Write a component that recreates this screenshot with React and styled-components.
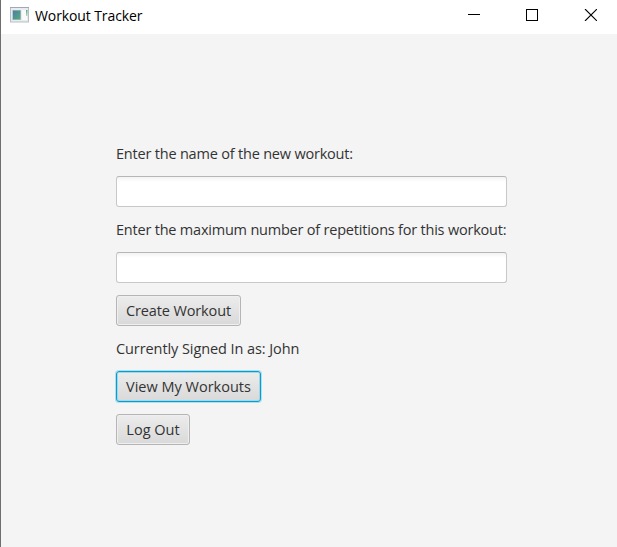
import React from 'react';
import styled, { createGlobalStyle } from 'styled-components';

const GlobalStyle = createGlobalStyle`
  * { box-sizing: border-box; }
  body { margin: 0; background: #f4f4f4; font-family: "Open Sans", "Noto Sans", sans-serif; }
`;

const Window = styled.div`
  width: 617px;
  height: 547px;
  display: flex;
  flex-direction: column;
  background: #f4f4f4;
  border-left: 1px solid #6e6e6e;
  overflow: hidden;
`;

const TitleBar = styled.header`
  height: 34px;
  flex: none;
  display: flex;
  align-items: flex-start;
  justify-content: space-between;
  background: #fff;
  padding: 0 20px 0 9px;
`;

const TitleGroup = styled.div`
  display: flex;
  align-items: flex-start;
  gap: 6px;
  padding-top: 6px;
`;

const AppIcon = styled.svg`
  display: block;
  margin-top: 1px;
`;

const Title = styled.h1`
  margin: 0;
  font-size: 14px;
  font-weight: 400;
  line-height: 20px;
  letter-spacing: -0.1px;
  white-space: nowrap;
  color: #000;
`;

const Controls = styled.div`
  display: flex;
  gap: 46px;
  padding-top: 9px;
`;

const Control = styled.button`
  padding: 0;
  border: 0;
  background: none;
  display: block;
  height: 12px;

  svg { display: block; }
`;

const Form = styled.main`
  width: 391px;
  margin: 109px 0 0 115px;
  display: flex;
  flex-direction: column;
  align-items: flex-start;
  gap: 12px;
`;

const Label = styled.label`
  height: 21px;
  font-size: 14.5px;
  line-height: 21px;
  letter-spacing: ${(p) => p.$track || 0}px;
  white-space: nowrap;
  color: #333;
`;

const Field = styled.input`
  width: 391px;
  height: 31px;
  padding: 0 9px;
  border: 1px solid #c8c8c8;
  border-top-color: #b6b6b6;
  border-radius: 3px;
  outline: none;
  background: linear-gradient(#f3f3f3, #fff 5px);
  font: inherit;
`;

const Button = styled.button`
  height: 31px;
  width: ${(p) => p.$width}px;
  padding: 0;
  border: 1px solid ${(p) => (p.$focused ? '#039ed3' : '#b5b5b5')};
  border-radius: 3px;
  background: linear-gradient(#ececec, #d9d9d9);
  box-shadow: ${(p) => (p.$focused
    ? '0 0 0 1px #b0deeb, inset 0 0 0 1px #a3d6e6'
    : 'inset 0 0 0 1px #efefef')};
  font: 400 14.5px/21px "Open Sans", "Noto Sans", sans-serif;
  letter-spacing: ${(p) => p.$track || 0}px;
  white-space: nowrap;
  color: #333;
`;

export default function App() {
  return (
    <>
      <GlobalStyle />
      <Window>
        <TitleBar>
          <TitleGroup>
            <AppIcon width="19" height="16" viewBox="0 0 19 16">
              <defs>
                <linearGradient id="pane" x1="0" y1="0" x2="1" y2="1">
                  <stop offset="0" stopColor="#4a7fa5" />
                  <stop offset="1" stopColor="#58aa7c" />
                </linearGradient>
                <linearGradient id="strip" x1="0" y1="0" x2="0" y2="1">
                  <stop offset="0" stopColor="#56a58a" />
                  <stop offset="1" stopColor="#b5dfbd" />
                </linearGradient>
              </defs>
              <rect x="0.5" y="0.5" width="18" height="14.5" fill="#e9ecef" stroke="#b9bdc5" />
              <path d="M0 0.5h19" stroke="#a0a8b6" />
              <rect x="2" y="3" width="9" height="10" fill="#b9cdd0" />
              <rect x="3" y="3.5" width="7.5" height="9" fill="url(#pane)" />
              <rect x="12" y="3" width="5" height="10" fill="#fafafa" />
              <rect x="16" y="3" width="1.5" height="6" fill="url(#strip)" />
            </AppIcon>
            <Title>Workout Tracker</Title>
          </TitleGroup>
          <Controls>
            <Control aria-label="Minimize">
              <svg width="12" height="12"><path d="M0 5.5h12" stroke="#000" /></svg>
            </Control>
            <Control aria-label="Maximize">
              <svg width="12" height="12"><rect x="0.5" y="0.5" width="11" height="11" fill="none" stroke="#000" /></svg>
            </Control>
            <Control aria-label="Close">
              <svg width="13" height="12"><path d="M1 0l12 12M13 0L1 12" stroke="#000" strokeWidth="1.1" /></svg>
            </Control>
          </Controls>
        </TitleBar>
        <Form>
          <Label htmlFor="name" $track={-0.2}>Enter the name of the new workout:</Label>
          <Field id="name" />
          <Label htmlFor="reps" $track={-0.21}>Enter the maximum number of repetitions for this workout:</Label>
          <Field id="reps" />
          <Button $width={125} $track={-0.12}>Create Workout</Button>
          <Label as="div" $track={-0.08}>Currently Signed In as: John</Label>
          <Button $width={145} $focused>View My Workouts</Button>
          <Button $width={74}>Log Out</Button>
        </Form>
      </Window>
    </>
  );
}
